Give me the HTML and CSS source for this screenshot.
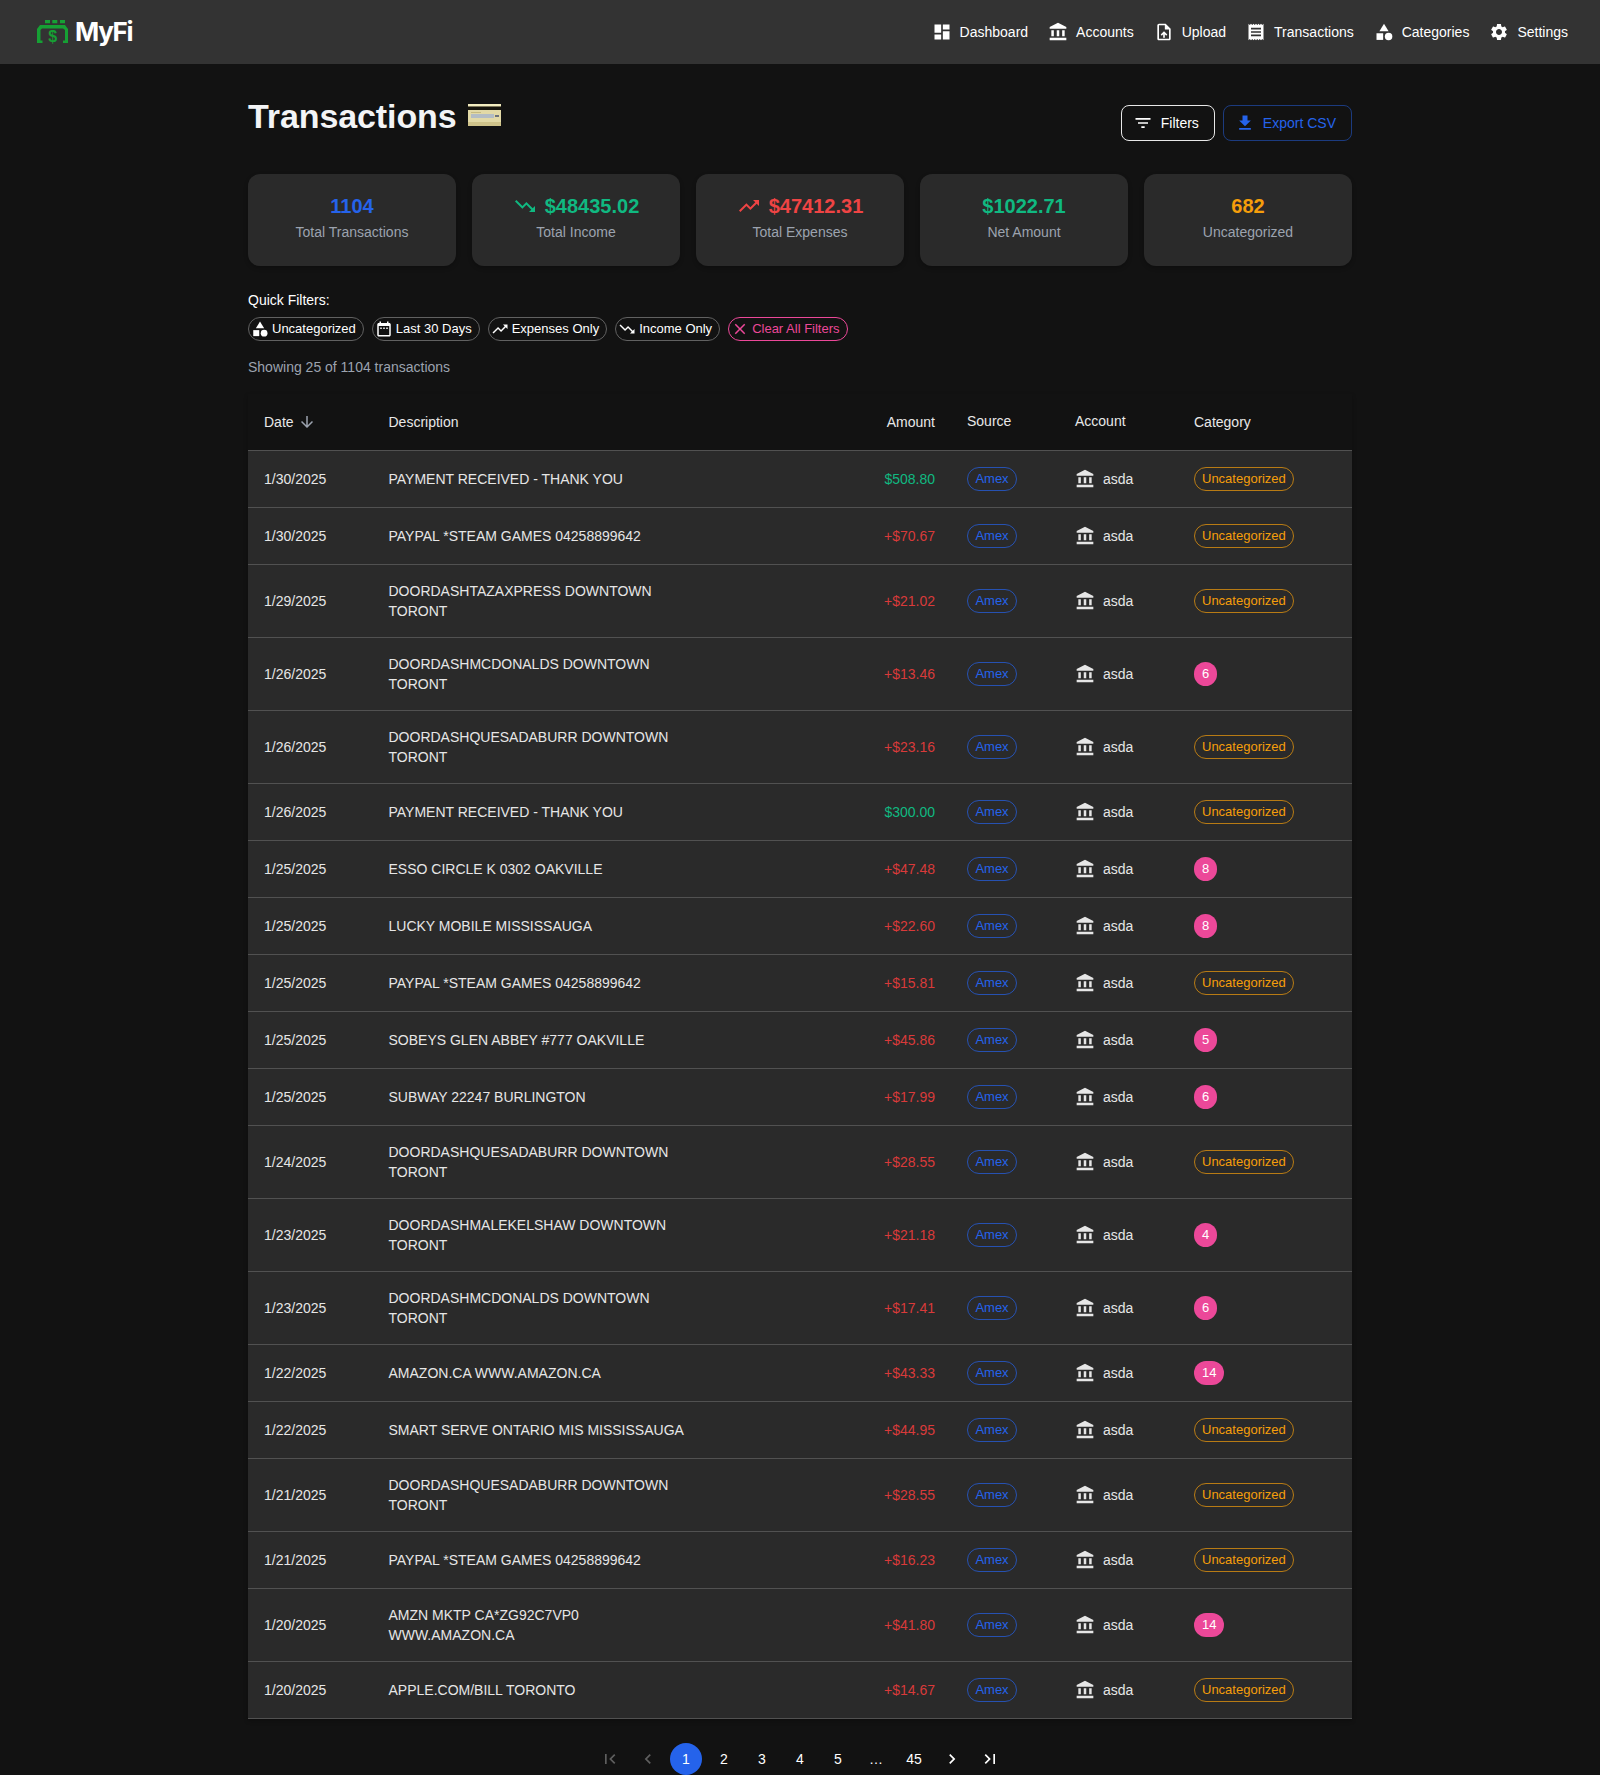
FILE: index.html
```html
<!DOCTYPE html>
<html lang="en">
<head>
    <meta charset="utf-8"/>
    <title>MyFi - Transactions</title>
    <link rel="stylesheet" href="styles.css">
</head>
<body>
<svg class="sprites" width="0" height="0">
    <symbol id="i-dashboard" viewBox="0 0 24 24"><path d="M3 13h8V3H3v10zm0 8h8v-6H3v6zm10 0h8V11h-8v10zm0-18v6h8V3h-8z"/></symbol>
    <symbol id="i-bank" viewBox="0 0 24 24"><path d="M4 10h3v7H4zm6.5 0h3v7h-3zM2 19h20v3H2zm15-9h3v7h-3zm-5-9L2 6v2h20V6z"/></symbol>
    <symbol id="i-upload" viewBox="0 0 24 24"><path d="M14 2H6c-1.1 0-1.99.9-1.99 2L4 20c0 1.1.89 2 1.99 2H18c1.1 0 2-.9 2-2V8l-6-6zm4 18H6V4h7v5h5v11zM8 15.01l1.41 1.41L11 14.84V19h2v-4.16l1.59 1.59L16 15.01 12.01 11 8 15.01z"/></symbol>
    <symbol id="i-receipt" viewBox="0 0 24 24"><path d="M18 17H6v-2h12v2zm0-4H6v-2h12v2zm0-4H6V7h12v2zM3 22l1.5-1.5L6 22l1.5-1.5L9 22l1.5-1.5L12 22l1.5-1.5L15 22l1.5-1.5L18 22l1.5-1.5L21 22V2l-1.5 1.5L18 2l-1.5 1.5L15 2l-1.5 1.5L12 2l-1.5 1.5L9 2 7.5 3.5 6 2 4.5 3.5 3 2v20z"/></symbol>
    <symbol id="i-category" viewBox="0 0 24 24"><path d="M12 2l-5.5 9h11z"/><circle cx="17.5" cy="17.5" r="4.5"/><path d="M3 13.5h8v8H3z"/></symbol>
    <symbol id="i-settings" viewBox="0 0 24 24"><path d="M19.14 12.94c.04-.3.06-.61.06-.94 0-.32-.02-.64-.07-.94l2.03-1.58c.18-.14.23-.41.12-.61l-1.92-3.32c-.12-.22-.37-.29-.59-.22l-2.39.96c-.5-.38-1.03-.7-1.62-.94l-.36-2.54c-.04-.24-.24-.41-.48-.41h-3.84c-.24 0-.43.17-.47.41l-.36 2.54c-.59.24-1.13.57-1.62.94l-2.39-.96c-.22-.08-.47 0-.59.22L2.74 8.87c-.12.21-.08.47.12.61l2.03 1.58c-.05.3-.09.63-.09.94s.02.64.07.94l-2.03 1.58c-.18.14-.23.41-.12.61l1.92 3.32c.12.22.37.29.59.22l2.39-.96c.5.38 1.03.7 1.62.94l.36 2.54c.05.24.24.41.48.41h3.84c.24 0 .44-.17.47-.41l.36-2.54c.59-.24 1.13-.56 1.62-.94l2.39.96c.22.08.47 0 .59-.22l1.92-3.32c.12-.22.07-.47-.12-.61l-2.01-1.58zM12 15.6c-1.98 0-3.6-1.62-3.6-3.6s1.62-3.6 3.6-3.6 3.6 1.62 3.6 3.6-1.62 3.6-3.6 3.6z"/></symbol>
    <symbol id="i-filter" viewBox="0 0 24 24"><path d="M10 18h4v-2h-4v2zM3 6v2h18V6H3zm3 7h12v-2H6v2z"/></symbol>
    <symbol id="i-download" viewBox="0 0 24 24"><path d="M19 9h-4V3H9v6H5l7 7 7-7zM5 18v2h14v-2H5z"/></symbol>
    <symbol id="i-down" viewBox="0 0 24 24"><path d="M16 18l2.29-2.29-4.88-4.88-4 4L2 7.41 3.41 6l6 6 4-4 6.3 6.29L22 12v6z"/></symbol>
    <symbol id="i-up" viewBox="0 0 24 24"><path d="M16 6l2.29 2.29-4.88 4.88-4-4L2 16.59 3.41 18l6-6 4 4 6.3-6.29L22 12V6z"/></symbol>
    <symbol id="i-calendar" viewBox="0 0 24 24"><path d="M19 4h-1V2h-2v2H8V2H6v2H5c-1.11 0-1.99.9-1.99 2L3 20c0 1.1.89 2 2 2h14c1.1 0 2-.9 2-2V6c0-1.1-.9-2-2-2zm0 16H5V8h14v12zM9 12H7v-2h2v2zm4 0h-2v-2h2v2zm4 0h-2v-2h2v2z"/></symbol>
    <symbol id="i-close" viewBox="0 0 24 24"><path d="M19 6.41L17.59 5 12 10.59 6.41 5 5 6.41 10.59 12 5 17.59 6.41 19 12 13.41 17.59 19 19 17.59 13.41 12z"/></symbol>
    <symbol id="i-arrow" viewBox="0 0 24 24"><path d="M20 12l-1.41-1.41L13 16.17V4h-2v12.17l-5.58-5.59L4 12l8 8 8-8z"/></symbol>
    <symbol id="i-first" viewBox="0 0 24 24"><path d="M18.41 16.59L13.82 12l4.59-4.59L17 6l-6 6 6 6zM6 6h2v12H6z"/></symbol>
    <symbol id="i-last" viewBox="0 0 24 24"><path d="M5.59 7.41L10.18 12l-4.59 4.59L7 18l6-6-6-6zM16 6h2v12h-2z"/></symbol>
    <symbol id="i-prev" viewBox="0 0 24 24"><path d="M15.41 7.41L14 6l-6 6 6 6 1.41-1.41L10.83 12z"/></symbol>
    <symbol id="i-next" viewBox="0 0 24 24"><path d="M10 6L8.59 7.41 13.17 12l-4.58 4.59L10 18l6-6z"/></symbol>
</svg>

<header class="topbar">
    <a class="brand" href="#">
        <svg class="brand-mark" viewBox="0 0 32 24" width="32" height="24">
            <path class="mark-fill" d="M8 0h5v3.3H8zM15.3 0h5v3.3h-5zM23 0h5v3.3h-5zM3 5h25l3 4v14h-5v-2.5h2V10l-2-1.5H5L3.5 10v10.5h2V23H0V9z"/>
            <text class="mark-dollar" x="15.7" y="21.5" text-anchor="middle">$</text>
        </svg>
        <span class="brand-name">MyFi</span>
    </a>
    <nav class="nav">
        <a class="nav-link" href="#"><svg class="ico"><use href="#i-dashboard"/></svg>Dashboard</a>
        <a class="nav-link" href="#"><svg class="ico"><use href="#i-bank"/></svg>Accounts</a>
        <a class="nav-link" href="#"><svg class="ico"><use href="#i-upload"/></svg>Upload</a>
        <a class="nav-link" href="#"><svg class="ico"><use href="#i-receipt"/></svg>Transactions</a>
        <a class="nav-link" href="#"><svg class="ico"><use href="#i-category"/></svg>Categories</a>
        <a class="nav-link" href="#"><svg class="ico"><use href="#i-settings"/></svg>Settings</a>
    </nav>
</header>

<main class="page">
    <div class="page-head">
        <h1 class="page-title">Transactions
            <svg class="card-emoji" viewBox="0 0 33 22" width="33" height="22">
                <rect width="33" height="22" rx="1" fill="#e2d9a6"/>
                <rect width="33" height="2" fill="#f2ecbf"/>
                <rect y="2.5" width="33" height="3.5" fill="#15130c"/>
                <rect x="3" y="10" width="23" height="4" fill="#b3bcc4"/>
                <rect x="27" y="11" width="4" height="2" fill="#6b707a"/>
                <rect x="3" y="8" width="10" height="1" fill="#c4b981"/>
                <rect y="18" width="33" height="4" fill="#cfc38a"/>
            </svg>
        </h1>
        <div class="head-actions">
            <button class="btn"><svg class="ico"><use href="#i-filter"/></svg>Filters</button>
            <button class="btn btn-blue"><svg class="ico"><use href="#i-download"/></svg>Export CSV</button>
        </div>
    </div>

    <section class="stats">
        <div class="stat">
            <div class="stat-value c-blue">1104</div>
            <div class="stat-label">Total Transactions</div>
        </div>
        <div class="stat">
            <div class="stat-value c-green"><svg class="stat-ico"><use href="#i-down"/></svg>$48435.02</div>
            <div class="stat-label">Total Income</div>
        </div>
        <div class="stat">
            <div class="stat-value c-red"><svg class="stat-ico"><use href="#i-up"/></svg>$47412.31</div>
            <div class="stat-label">Total Expenses</div>
        </div>
        <div class="stat">
            <div class="stat-value c-green">$1022.71</div>
            <div class="stat-label">Net Amount</div>
        </div>
        <div class="stat">
            <div class="stat-value c-amber">682</div>
            <div class="stat-label">Uncategorized</div>
        </div>
    </section>

    <div class="quick-label">Quick Filters:</div>
    <div class="quick-row">
        <span class="qchip"><svg class="qico"><use href="#i-category"/></svg>Uncategorized</span>
        <span class="qchip"><svg class="qico"><use href="#i-calendar"/></svg>Last 30 Days</span>
        <span class="qchip"><svg class="qico"><use href="#i-up"/></svg>Expenses Only</span>
        <span class="qchip"><svg class="qico"><use href="#i-down"/></svg>Income Only</span>
        <span class="qchip qchip-clear"><svg class="qico"><use href="#i-close"/></svg>Clear All Filters</span>
    </div>
    <p class="showing">Showing 25 of 1104 transactions</p>

    <table class="tx-table">
        <thead>
            <tr>
                <th class="col-date">Date <svg class="sort-ico"><use href="#i-arrow"/></svg></th>
                <th class="col-desc">Description</th>
                <th class="col-amount">Amount</th>
                <th class="col-source"><span class="raise">Source</span></th>
                <th class="col-account"><span class="raise">Account</span></th>
                <th class="col-cat">Category</th>
            </tr>
        </thead>
        <tbody id="rows"></tbody>
    </table>

    <nav class="pager">
        <span class="pg off"><svg class="pg-ico"><use href="#i-first"/></svg></span>
        <span class="pg off"><svg class="pg-ico"><use href="#i-prev"/></svg></span>
        <span class="pg on">1</span>
        <span class="pg">2</span>
        <span class="pg">3</span>
        <span class="pg">4</span>
        <span class="pg">5</span>
        <span class="pg">…</span>
        <span class="pg">45</span>
        <span class="pg"><svg class="pg-ico"><use href="#i-next"/></svg></span>
        <span class="pg"><svg class="pg-ico"><use href="#i-last"/></svg></span>
    </nav>
</main>

<script>
  var data = [
    ["1/30/2025", "PAYMENT RECEIVED - THANK YOU", "$508.80", ""],
    ["1/30/2025", "PAYPAL *STEAM GAMES 04258899642", "+$70.67", ""],
    ["1/29/2025", "DOORDASHTAZAXPRESS DOWNTOWN TORONT", "+$21.02", ""],
    ["1/26/2025", "DOORDASHMCDONALDS DOWNTOWN TORONT", "+$13.46", "6"],
    ["1/26/2025", "DOORDASHQUESADABURR DOWNTOWN TORONT", "+$23.16", ""],
    ["1/26/2025", "PAYMENT RECEIVED - THANK YOU", "$300.00", ""],
    ["1/25/2025", "ESSO CIRCLE K 0302 OAKVILLE", "+$47.48", "8"],
    ["1/25/2025", "LUCKY MOBILE MISSISSAUGA", "+$22.60", "8"],
    ["1/25/2025", "PAYPAL *STEAM GAMES 04258899642", "+$15.81", ""],
    ["1/25/2025", "SOBEYS GLEN ABBEY #777 OAKVILLE", "+$45.86", "5"],
    ["1/25/2025", "SUBWAY 22247 BURLINGTON", "+$17.99", "6"],
    ["1/24/2025", "DOORDASHQUESADABURR DOWNTOWN TORONT", "+$28.55", ""],
    ["1/23/2025", "DOORDASHMALEKELSHAW DOWNTOWN TORONT", "+$21.18", "4"],
    ["1/23/2025", "DOORDASHMCDONALDS DOWNTOWN TORONT", "+$17.41", "6"],
    ["1/22/2025", "AMAZON.CA WWW.AMAZON.CA", "+$43.33", "14"],
    ["1/22/2025", "SMART SERVE ONTARIO MIS MISSISSAUGA", "+$44.95", ""],
    ["1/21/2025", "DOORDASHQUESADABURR DOWNTOWN TORONT", "+$28.55", ""],
    ["1/21/2025", "PAYPAL *STEAM GAMES 04258899642", "+$16.23", ""],
    ["1/20/2025", "AMZN MKTP CA*ZG92C7VP0 WWW.AMAZON.CA", "+$41.80", "14"],
    ["1/20/2025", "APPLE.COM/BILL TORONTO", "+$14.67", ""]
  ];

  var html = "";
  data.forEach(function (r) {
    var income = r[2].charAt(0) != "+";
    var cat = r[3]
      ? '<span class="chip chip-pink">' + r[3] + '</span>'
      : '<span class="chip chip-amber">Uncategorized</span>';
    html += '<tr>' +
      '<td>' + r[0] + '</td>' +
      '<td><div class="desc">' + r[1] + '</div></td>' +
      '<td class="amount ' + (income ? 'amount-in' : 'amount-out') + '">' + r[2] + '</td>' +
      '<td><span class="chip chip-blue">Amex</span></td>' +
      '<td><div class="acct"><svg class="ico"><use href="#i-bank"/></svg>asda</div></td>' +
      '<td>' + cat + '</td>' +
      '</tr>';
  });
  document.getElementById("rows").innerHTML = html;
</script>
</body>
</html>
```

FILE: styles.css
```css
* {
    box-sizing: border-box;
}

html, body {
    margin: 0;
    padding: 0;
}

body {
    background: #121212;
    color: #fff;
    font-family: "Liberation Sans", Arial, sans-serif;
    font-size: 14px;
    line-height: 20px;
}

a {
    color: inherit;
    text-decoration: none;
}

.sprites {
    position: absolute;
}

svg {
    fill: currentColor;
    flex-shrink: 0;
}

.ico {
    width: 20px;
    height: 20px;
    margin-left: -4px;
    margin-right: 8px;
}

/* top bar */
.topbar {
    height: 64px;
    padding: 0 24px 0 37px;
    display: flex;
    align-items: center;
    justify-content: space-between;
    background: #333;
}

.brand {
    display: flex;
    align-items: center;
    gap: 6px;
}

.mark-fill {
    fill: #16a034;
}

.mark-dollar {
    fill: #16a034;
    font-size: 16px;
    font-weight: 700;
}

.brand-name {
    font-family: Inter, sans-serif;
    font-size: 26px;
    line-height: 32px;
    font-weight: 700;
    letter-spacing: -1.3px;
}

.nav {
    display: flex;
    gap: 8px;
}

.nav-link {
    display: flex;
    align-items: center;
    padding: 6px 8px;
    line-height: 24px;
}

/* heading */
.page {
    width: 1104px;
    margin: 0 auto;
}

.page-head {
    display: flex;
    justify-content: space-between;
    height: 77px;
    margin-bottom: 33px;
}

.page-title {
    margin: 31px 0 0;
    display: flex;
    align-items: flex-start;
    gap: 11px;
    height: 42px;
    font-size: 34px;
    line-height: 42px;
    font-weight: 700;
    letter-spacing: -0.1px;
    color: #f3f4f6;
}

.card-emoji {
    margin-top: 9px;
}

.head-actions {
    display: flex;
    gap: 8px;
    margin-top: 41px;
    height: 36px;
}

.btn {
    display: flex;
    align-items: center;
    height: 36px;
    padding: 0 15px;
    background: none;
    border: 1px solid #e8e8e8;
    border-radius: 8px;
    color: #fff;
    font: inherit;
}

.btn-blue {
    border-color: rgba(37, 99, 235, 0.5);
    color: #2563eb;
}

/* stat cards */
.stats {
    display: grid;
    grid-template-columns: repeat(5, 1fr);
    gap: 16px;
    margin-bottom: 24px;
}

.stat {
    height: 92px;
    padding-top: 16px;
    background: #2a2a2a;
    border-radius: 12px;
    box-shadow: 0 2px 4px rgba(0, 0, 0, 0.25);
    text-align: center;
}

.stat-value {
    display: flex;
    align-items: center;
    justify-content: center;
    gap: 8px;
    font-size: 20px;
    line-height: 32px;
    font-weight: 700;
}

.stat-ico {
    width: 24px;
    height: 24px;
}

.stat-label {
    color: #9ca3af;
}

.c-blue { color: #2563eb; }
.c-green { color: #10b981; }
.c-red { color: #ef4444; }
.c-amber { color: #f59e0b; }

/* quick filters */
.quick-label {
    margin-bottom: 7px;
}

.quick-row {
    display: flex;
    gap: 8px;
}

.qchip {
    display: inline-flex;
    align-items: center;
    height: 24px;
    padding: 0 7px 0 2px;
    border: 1px solid #616161;
    border-radius: 12px;
    font-size: 13px;
}

.qico {
    width: 18px;
    height: 18px;
    margin-right: 3px;
}

.qchip-clear {
    border-color: #ec4899;
    color: #ec4899;
}

.showing {
    margin: 16px 0 17px;
    color: #9ca3af;
}

/* table */
.tx-table {
    width: 100%;
    border-collapse: collapse;
    table-layout: fixed;
    box-shadow: 0 2px 4px rgba(0, 0, 0, 0.25);
}

.tx-table th {
    height: 56px;
    padding: 0 16px;
    font-weight: 400;
    text-align: left;
    color: #e8e8e8;
    background: #121212;
    border-bottom: 1px solid #515151;
}

.tx-table td {
    padding: 16px;
    background: #2a2a2a;
    border-bottom: 1px solid #515151;
    color: #e6e6e6;
}

.col-date { width: 124.5px; }
.col-desc { width: 436.5px; }
.col-amount { width: 142px; }
.col-source { width: 108px; }
.col-account { width: 119px; }
.col-cat { width: 174px; }

.tx-table th.col-amount,
.tx-table td.amount {
    text-align: right;
}

.raise {
    position: relative;
    top: -1px;
}

.sort-ico {
    width: 18px;
    height: 18px;
    margin-left: 1px;
    vertical-align: -4px;
    color: #9ca3af;
}

.desc {
    max-width: 300px;
}

.tx-table td.amount-in { color: #10b981; }
.tx-table td.amount-out { color: #d93a3a; }

.acct {
    display: flex;
    align-items: center;
}

.acct .ico {
    margin-left: 0;
}

.chip {
    display: inline-flex;
    align-items: center;
    justify-content: center;
    height: 24px;
    padding: 0 7px;
    border: 1px solid;
    border-radius: 12px;
    font-size: 13px;
    vertical-align: middle;
}

.chip-blue {
    min-width: 50px;
    border-color: rgba(37, 99, 235, 0.7);
    color: #2563eb;
}

.chip-amber {
    border-color: rgba(245, 158, 11, 0.7);
    color: #f59e0b;
}

.chip-pink {
    padding: 0 8px;
    border: 0;
    background: #ec4899;
    color: #fff;
}

/* pagination */
.pager {
    display: flex;
    justify-content: center;
    gap: 6px;
    margin-top: 24px;
}

.pg {
    display: flex;
    align-items: center;
    justify-content: center;
    width: 32px;
    height: 32px;
    border-radius: 50%;
}

.pg.on {
    background: #2563eb;
}

.pg.off {
    color: #5f5f5f;
}

.pg-ico {
    width: 20px;
    height: 20px;
}
```
